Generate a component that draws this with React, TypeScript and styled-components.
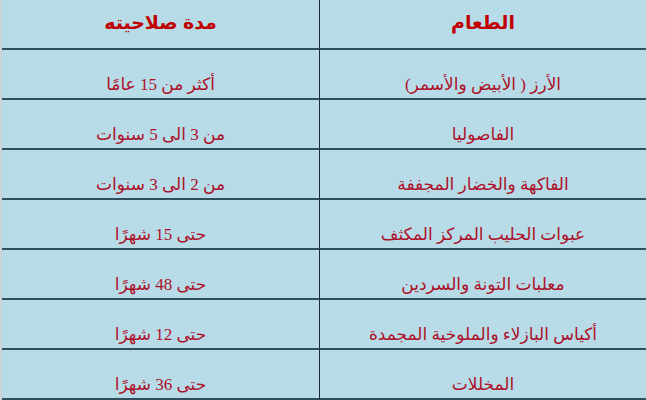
import React from 'react';
import styled, { createGlobalStyle } from 'styled-components';

const GlobalStyle = createGlobalStyle`
  html, body {
    margin: 0;
    padding: 0;
    background: #b7dce8;
  }
`;

const rows: Array<[string, string]> = [
  ['الأرز ( الأبيض والأسمر)', 'أكثر من 15 عامًا'],
  ['الفاصوليا', 'من 3 الى 5 سنوات'],
  ['الفاكهة والخضار المجففة', 'من 2 الى 3 سنوات'],
  ['عبوات الحليب المركز المكثف', 'حتى 15 شهرًا'],
  ['معلبات التونة والسردين', 'حتى 48 شهرًا'],
  ['أكياس البازلاء والملوخية المجمدة', 'حتى 12 شهرًا'],
  ['المخللات', 'حتى 36 شهرًا'],
];

const Table = styled.div`
  direction: rtl;
  width: 646px;
  height: 400px;
  box-sizing: border-box;
  border-left: 2px solid #c9d3d8;
  background: #b7dce8;
  display: grid;
  grid-template-columns: 327px 317px;
  grid-auto-rows: 50px;
  font-family: "Liberation Serif", "DejaVu Serif", "DejaVu Sans", serif;
  overflow: hidden;
`;

const Cell = styled.div<{ $head?: boolean; $first?: boolean }>`
  box-sizing: border-box;
  border-bottom: 2px solid #2f4d5b;
  border-left: ${(p) => (p.$first ? '1px solid #1b2b33' : 'none')};
  display: flex;
  justify-content: center;
  align-items: ${(p) => (p.$head ? 'center' : 'flex-end')};
  padding-bottom: ${(p) => (p.$head ? '4px' : '3px')};
  color: ${(p) => (p.$head ? '#c00000' : '#ad1028')};
  font-weight: ${(p) => (p.$head ? 700 : 400)};
  font-size: ${(p) => (p.$head ? '19px' : '17px')};
  font-family: ${(p) =>
    p.$head ? '"Liberation Sans", "DejaVu Sans", sans-serif' : 'inherit'};
  white-space: nowrap;
`;

function App() {
  return (
    <>
      <GlobalStyle />
      <Table>
        <Cell $head $first>الطعام</Cell>
        <Cell $head>مدة صلاحيته</Cell>
        {rows.map(([food, life]) => (
          <React.Fragment key={food}>
            <Cell $first>{food}</Cell>
            <Cell>{life}</Cell>
          </React.Fragment>
        ))}
      </Table>
    </>
  );
}

export default App;
